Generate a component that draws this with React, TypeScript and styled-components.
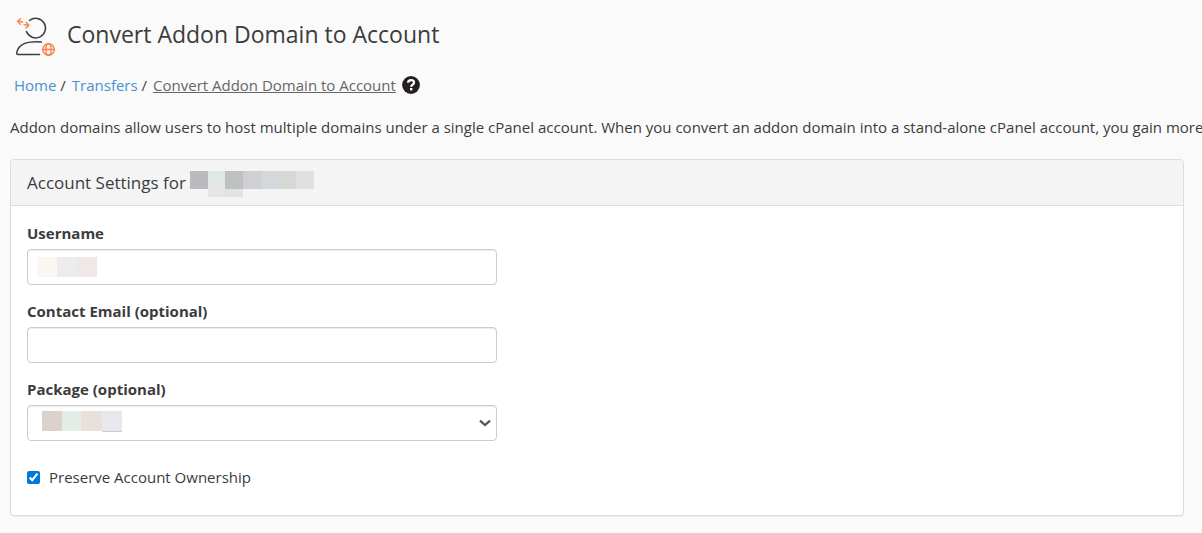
import React from "react";
import styled, { createGlobalStyle } from "styled-components";

const GlobalStyle = createGlobalStyle`
  *, *::before, *::after { box-sizing: border-box; }
  body {
    margin: 0;
    background: #fafafa;
    color: #3c3c3c;
    font: 15px/22px "Open Sans", sans-serif;
    overflow-x: hidden;
  }
`;

const Page = styled.main`
  padding: 13px 18px 16px 10px;
`;

const Header = styled.header`
  display: flex;
  align-items: center;
  gap: 10px;
  padding-left: 4px;
`;

const Title = styled.h1`
  margin: 0;
  padding-bottom: 2px;
  font-size: 23px;
  line-height: 32px;
  font-weight: 400;
`;

const Breadcrumbs = styled.nav`
  display: flex;
  align-items: center;
  gap: 6px;
  margin-top: 17px;
  padding-left: 4px;
`;

const Crumb = styled.a<{ $current?: boolean }>`
  color: ${(p) => (p.$current ? "#666" : "#4a90d2")};
  text-decoration: ${(p) => (p.$current ? "underline" : "none")};
`;

const HelpButton = styled.button`
  display: flex;
  padding: 0;
  border: 0;
  background: none;
  cursor: pointer;
`;

const Intro = styled.p`
  margin: 20px -18px 21px 0;
  overflow: hidden;
  white-space: nowrap;
`;

const Panel = styled.section`
  border: 1px solid #ddd;
  border-radius: 4px;
  background: #fff;
  box-shadow: 0 1px 1px rgba(0, 0, 0, 0.05);
`;

const PanelHeading = styled.h2`
  display: flex;
  align-items: center;
  gap: 4px;
  height: 46px;
  margin: 0;
  padding: 0 16px;
  border-bottom: 1px solid #ddd;
  border-radius: 3px 3px 0 0;
  background: #f4f4f4;
  font-size: 17px;
  font-weight: 400;
`;

const Form = styled.form`
  display: flex;
  flex-direction: column;
  gap: 15px;
  padding: 16px 16px 27px;
`;

const Field = styled.div`
  display: flex;
  flex-direction: column;
  gap: 5px;
  max-width: 470px;
`;

const Label = styled.label`
  font-weight: 700;
`;

const ControlBox = styled.div`
  display: grid;
  align-items: center;
  & > * { grid-area: 1 / 1; }
`;

const Input = styled.input`
  width: 100%;
  height: 36px;
  padding: 6px 10px;
  border: 1px solid #ccc;
  border-radius: 4px;
  background: #fff;
  box-shadow: inset 0 1px 1px rgba(0, 0, 0, 0.075);
  font: inherit;
`;

const Select = styled.select`
  appearance: none;
  width: 100%;
  height: 36px;
  padding: 6px 28px 6px 10px;
  border: 1px solid #ccc;
  border-radius: 4px;
  background: #fff;
  box-shadow: inset 0 1px 1px rgba(0, 0, 0, 0.075);
  font: inherit;
`;

const Overlay = styled.div<{ $inset: number }>`
  display: flex;
  margin: 0 5px 0 ${(p) => p.$inset}px;
  justify-content: space-between;
  align-items: center;
  pointer-events: none;
`;

const CheckLabel = styled.label`
  display: flex;
  align-items: center;
  gap: 9px;
  margin-top: 10px;
`;

const Checkbox = styled.input`
  width: 13px;
  height: 13px;
  margin: 0;
  accent-color: #0078d7;
`;

const MosaicRow = styled.span<{ $lift: number }>`
  display: flex;
  align-items: flex-start;
  flex: none;
  padding-bottom: ${(p) => p.$lift}px;
`;

const Tile = styled.span<{ $color: string; $width: number; $height: number; $foot?: string; $footHeight?: number }>`
  width: ${(p) => p.$width}px;
  height: ${(p) => p.$height}px;
  background: ${(p) => p.$color};
  box-shadow: ${(p) => (p.$foot ? `0 ${p.$footHeight}px 0 ${p.$foot}` : "none")};
`;

type TileData = { color: string; width: number; foot?: string; footHeight?: number };

function Mosaic({ tiles, height, lift = 0 }: { tiles: TileData[]; height: number; lift?: number }) {
  return (
    <MosaicRow $lift={lift} aria-hidden="true">
      {tiles.map((t, i) => (
        <Tile key={i} $color={t.color} $width={t.width} $height={height} $foot={t.foot} $footHeight={t.footHeight} />
      ))}
    </MosaicRow>
  );
}

const domainTiles: TileData[] = [
  { color: "#bab9be", width: 18 },
  { color: "#e1e7e3", width: 17, foot: "#e9e5e6", footHeight: 8 },
  { color: "#bdc1c2", width: 18, foot: "#e3e3e3", footHeight: 8 },
  { color: "#cfd0d4", width: 18 },
  { color: "#d5d8db", width: 17 },
  { color: "#d7d9d6", width: 18 },
  { color: "#dfe0e2", width: 18 },
];
const userTiles: TileData[] = [
  { color: "#faf7f2", width: 20 },
  { color: "#ececed", width: 20 },
  { color: "#eee8e6", width: 20 },
];
const packageTiles: TileData[] = [
  { color: "#dcd1cc", width: 20 },
  { color: "#e5ebe5", width: 19 },
  { color: "#e9dfdb", width: 21 },
  { color: "#e7e8ed", width: 20, foot: "#ccc", footHeight: 1 },
];

function AccountIcon() {
  return (
    <svg width="43" height="44" viewBox="0 0 43 44" fill="none" strokeLinecap="round" strokeLinejoin="round" aria-hidden="true">
      <g stroke="#3d3d3d" strokeWidth="1.5">
        <path d="M15.5 7.5A9.8 9.8 0 1 1 12.5 18.5" />
        <path d="M27.5 29C18 28.3 9 29 5 34.5C3 37.3 2.7 39 2.7 40.2Q2.7 41.4 4 41.4H25.5" />
      </g>
      <g stroke="#ff7f4d" strokeWidth="1.4">
        <path d="M6.6 5.8L3.5 8.2L6.2 11.4M3.8 8.2L8.6 9M11.8 15L15 12.4L12.2 9.3M10 11.7L14.8 12.3" />
        <circle cx="34.5" cy="36.5" r="5.8" />
        <ellipse cx="34.5" cy="36.5" rx="2.7" ry="5.8" />
        <path d="M28.7 36.5H40.3" />
      </g>
    </svg>
  );
}

function HelpIcon() {
  return (
    <svg width="18" height="18" viewBox="0 0 18 18" aria-hidden="true">
      <circle cx="9" cy="9" r="8.9" fill="#231f20" />
      <path d="M6.1 6.8C6.2 5 7.4 4.2 9 4.2C10.8 4.2 12 5.2 12 6.7C12 8.7 9.2 8.7 9.2 10.8" fill="none" stroke="#fff" strokeWidth="2.3" />
      <rect x="8" y="12" width="2.4" height="2.4" fill="#fff" />
    </svg>
  );
}

function Chevron() {
  return (
    <svg width="14" height="8" viewBox="0 0 14 8" fill="none" aria-hidden="true">
      <path d="M2 1.6L7 6L12 1.6" stroke="#555" strokeWidth="2.2" />
    </svg>
  );
}

export default function App() {
  return (
    <>
      <GlobalStyle />
      <Page>
        <Header>
          <AccountIcon />
          <Title>Convert Addon Domain to Account</Title>
        </Header>
        <Breadcrumbs aria-label="Breadcrumb">
          <span><Crumb href="#home">Home</Crumb> /</span>
          <span><Crumb href="#transfers">Transfers</Crumb> /</span>
          <Crumb href="#convert" $current aria-current="page">Convert Addon Domain to Account</Crumb>
          <HelpButton type="button" aria-label="Help"><HelpIcon /></HelpButton>
        </Breadcrumbs>
        <Intro>
          Addon domains allow users to host multiple domains under a single cPanel account. When you convert an addon domain into a stand-alone cPanel account, you gain more control over its configuration.
        </Intro>
        <Panel>
          <PanelHeading>
            Account Settings for
            <Mosaic tiles={domainTiles} height={18} lift={6} />
          </PanelHeading>
          <Form>
            <Field>
              <Label htmlFor="username">Username</Label>
              <ControlBox>
                <Input id="username" type="text" />
                <Overlay $inset={10}><Mosaic tiles={userTiles} height={20} /></Overlay>
              </ControlBox>
            </Field>
            <Field>
              <Label htmlFor="email">Contact Email (optional)</Label>
              <Input id="email" type="email" />
            </Field>
            <Field>
              <Label htmlFor="package">Package (optional)</Label>
              <ControlBox>
                <Select id="package"><option value="" /></Select>
                <Overlay $inset={15}>
                  <Mosaic tiles={packageTiles} height={20} lift={5} />
                  <Chevron />
                </Overlay>
              </ControlBox>
            </Field>
            <CheckLabel>
              <Checkbox type="checkbox" defaultChecked />
              Preserve Account Ownership
            </CheckLabel>
          </Form>
        </Panel>
      </Page>
    </>
  );
}
